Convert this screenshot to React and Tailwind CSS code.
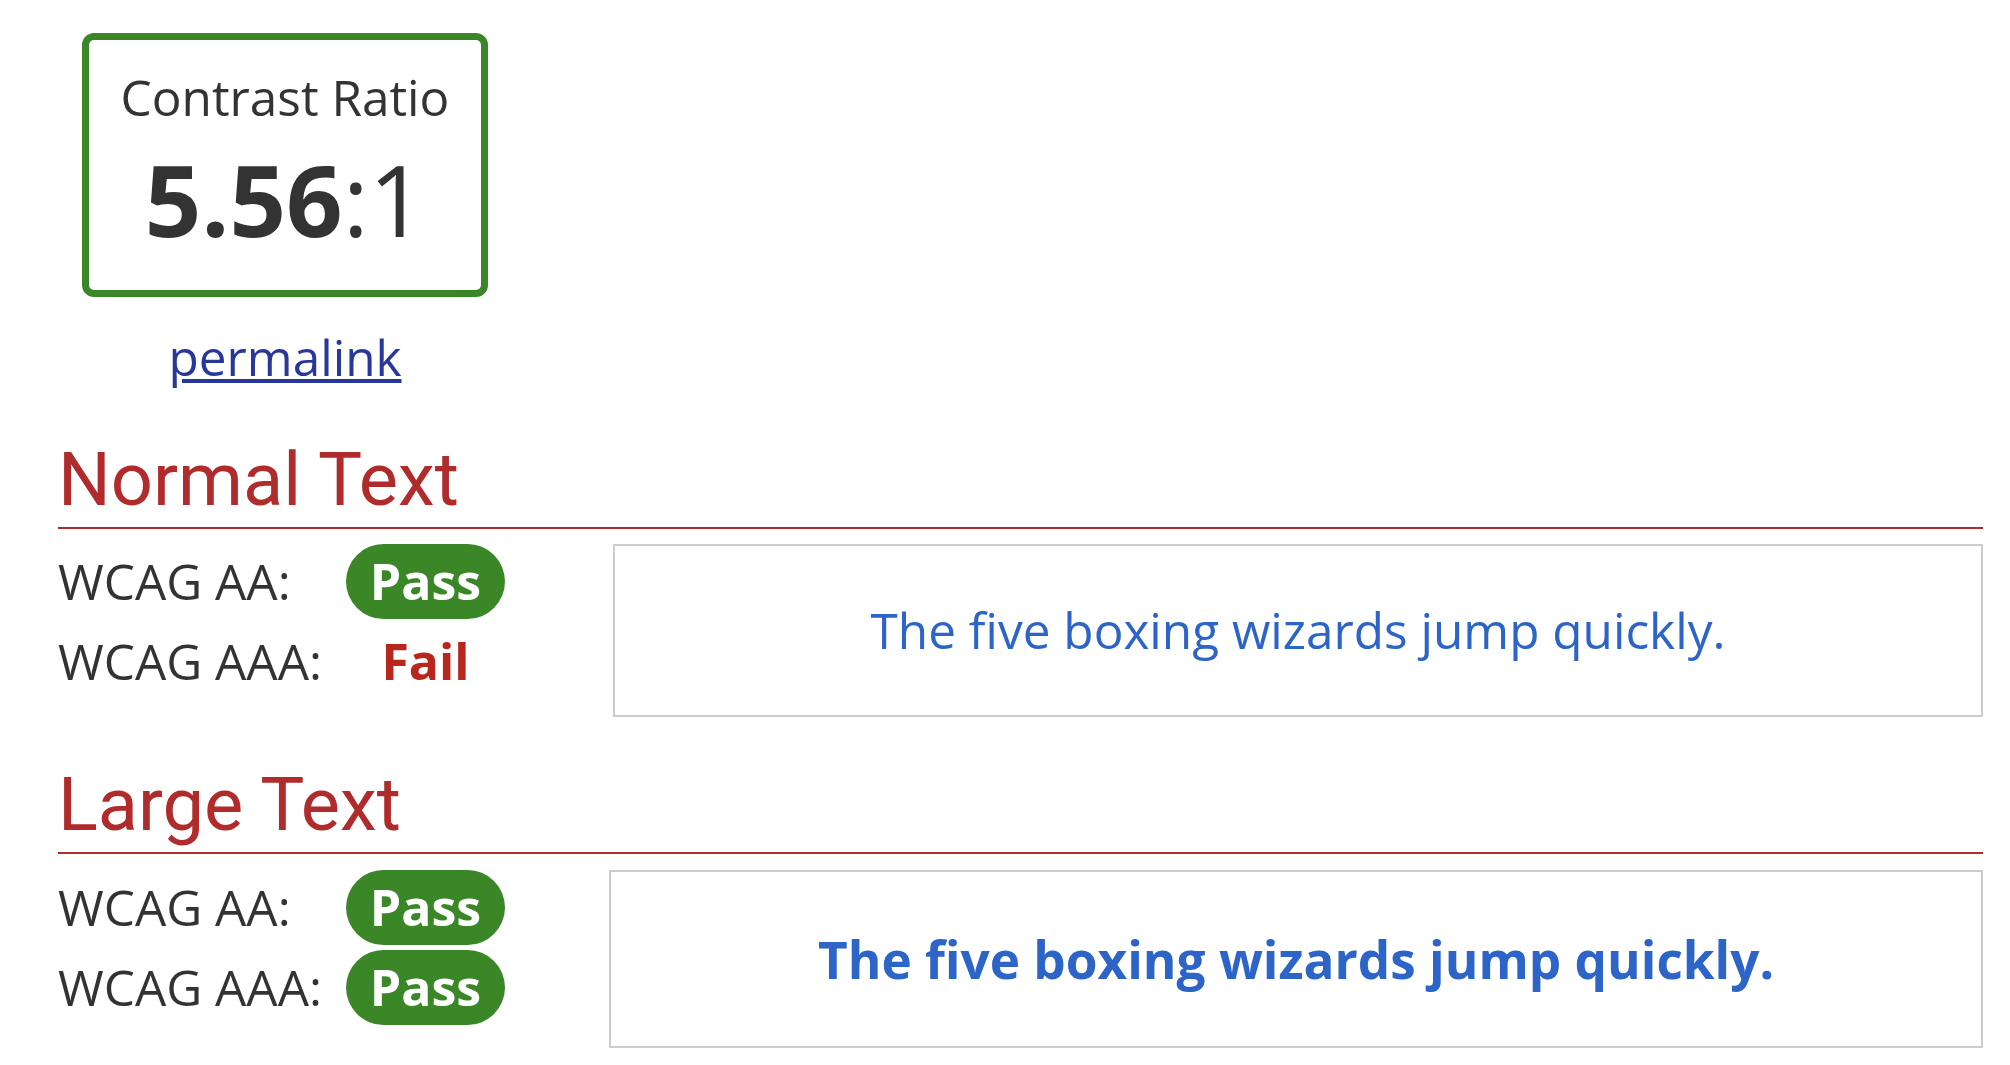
function Result({ kind }) {
  if (kind === "pass") {
    return (
      <span className="block w-[159px] h-[75px] rounded-full bg-[#3b8727] text-white font-bold text-[50px] text-center leading-[75px]">
        Pass
      </span>
    );
  }
  return (
    <span className="block w-[159px] h-[75px] text-[#b8261e] font-bold text-[50px] text-center leading-[75px]">
      Fail
    </span>
  );
}

function Row({ label, kind }) {
  return (
    <div className="flex items-start h-[75px]">
      <div className="w-[288px] shrink-0 leading-[75px]">{label}</div>
      <Result kind={kind} />
    </div>
  );
}

function Section({ title, aaa, leftW, boxH, mtTitle, mtRows, bold }) {
  return (
    <section>
      <h2
        className={`${mtTitle} font-['Roboto',sans-serif] font-normal text-[74px] leading-[90px] text-[#b02b2b] pb-[2px] border-b-2 border-[#b02b2b]`}
      >
        {title}
      </h2>
      <div className={`${mtRows} flex items-start`}>
        <div className={`${leftW} shrink-0 flex flex-col gap-[5px]`}>
          <Row label="WCAG AA:" kind="pass" />
          <Row label="WCAG AAA:" kind={aaa} />
        </div>
        <div
          className={`flex-1 ${boxH} border-2 border-[#cccccc] flex items-center justify-center leading-[75px] text-[#2d64c8] ${bold ? "font-bold text-[51.3px]" : "text-[49.5px]"}`}
        >
          The five boxing wizards jump quickly.
        </div>
      </div>
    </section>
  );
}

export default function App() {
  return (
    <div className="min-h-screen bg-white pl-[58px] pr-[27px] pt-[33px] text-[#333333] font-['Open_Sans',sans-serif] text-[49.5px] leading-[75px]">
      <div className="w-[454px] flex flex-col items-center">
        <div className="box-border w-[406px] h-[264px] border-[7px] border-[#3b8727] rounded-[12px] flex flex-col items-center pt-[20px]">
          <div className="text-[49.5px] leading-[75px]">Contrast Ratio</div>
          <div className="mt-[14px] text-[99px] leading-[100px]">
            <span className="font-bold">5.56</span>:1
          </div>
        </div>
        <a href="#" className="mt-[23px] text-[49.5px] leading-[75px] text-[#28389a] underline">
          permalink
        </a>
      </div>

      <Section
        title="Normal Text"
        aaa="fail"
        leftW="w-[555px]"
        boxH="h-[173px]"
        mtTitle="mt-[40px]"
        mtRows="mt-[15px]"
        bold={false}
      />
      <Section
        title="Large Text"
        aaa="pass"
        leftW="w-[551px]"
        boxH="h-[178px]"
        mtTitle="mt-[43px]"
        mtRows="mt-[16px]"
        bold={true}
      />
    </div>
  );
}
